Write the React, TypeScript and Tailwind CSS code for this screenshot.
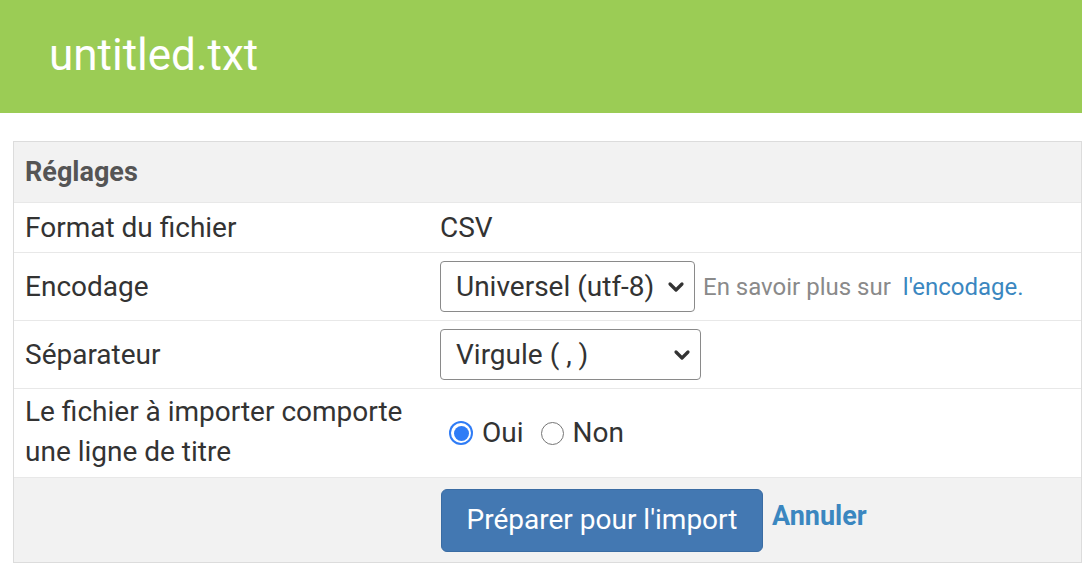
import React from 'react'

const font = { fontFamily: 'Roboto, "Liberation Sans", Arial, sans-serif' }

const Chevron = () => (
    <svg className="absolute right-[10px] top-1/2 -translate-y-1/2 pointer-events-none" width="18" height="13" viewBox="0 0 18 13">
        <path d="M3 3.5 L9 9.5 L15 3.5" fill="none" stroke="#333" strokeWidth="3.2" strokeLinecap="round" strokeLinejoin="round" />
    </svg>
)

const Select = ({ value, width }: { value: string, width: string }) => (
    <div className={`relative ${width} h-[51px]`}>
        <div className="w-full h-full border border-[#8a8a8a] rounded-[4px] bg-white flex items-center pl-[15px] text-[28px] text-[#333]">
            {value}
        </div>
        <Chevron />
    </div>
)

const Radio = ({ checked }: { checked: boolean }) =>
    checked ? (
        <span className="block w-[24px] h-[24px] rounded-full bg-[#2f7cf6] flex items-center justify-center">
            <span className="block w-[20px] h-[20px] rounded-full bg-white flex items-center justify-center">
                <span className="block w-[15px] h-[15px] rounded-full bg-[#2f7cf6]"></span>
            </span>
        </span>
    ) : (
        <span className="block w-[23px] h-[23px] rounded-full border-[1.5px] border-[#767676] bg-white"></span>
    )

const Row = ({ label, children, className }: { label: React.ReactNode, children?: React.ReactNode, className: string }) => (
    <div className={`flex border-t border-[#e8e8e8] ${className}`}>
        <div className="w-[414px] shrink-0 pl-[11px] flex items-center text-[28px] text-[#333]">{label}</div>
        <div className="flex items-center pl-[12px] text-[28px] text-[#333]">{children}</div>
    </div>
)

export default function App() {
    return (
        <div className="w-[1082px] h-[579px] overflow-hidden bg-white" style={font}>
            <header className="h-[113px] bg-[#9bcc55] flex items-center pl-[49px]">
                <h1 className="text-[44px] text-white leading-none -mt-[4px]">untitled.txt</h1>
            </header>

            <div className="mt-[28px] ml-[13px] w-[1069px] border border-[#dcdcdc]">
                <div className="h-[60px] bg-[#f2f2f2] flex items-center pl-[11px] text-[27px] font-bold text-[#555]">
                    Réglages
                </div>

                <Row label="Format du fichier" className="h-[50px]">CSV</Row>

                <Row label="Encodage" className="h-[68px]">
                    <Select value="Universel (utf-8)" width="w-[255px]" />
                    <span className="ml-[8px] text-[24px] text-[#8a8a8a]">En savoir plus sur</span>
                    <a className="ml-[12px] text-[24px] text-[#3b87c0]">l'encodage.</a>
                </Row>

                <Row label="Séparateur" className="h-[68px]">
                    <Select value="Virgule ( , )" width="w-[261px]" />
                </Row>

                <Row
                    label={<span className="leading-[40px] -mt-[2px]">Le fichier à importer comporte<br />une ligne de titre</span>}
                    className="h-[89px]"
                >
                    <div className="flex items-center pl-[9px]">
                        <Radio checked />
                        <span className="ml-[9px]">Oui</span>
                        <span className="ml-[17px]"><Radio checked={false} /></span>
                        <span className="ml-[9px]">Non</span>
                    </div>
                </Row>

                <div className="h-[85px] bg-[#f2f2f2] border-t border-[#e8e8e8] flex items-center pl-[427px]">
                    <button className="w-[322px] h-[63px] rounded-[6px] bg-[#4378b2] border border-[#3a6ca3] text-white text-[28px]">
                        Préparer pour l'import
                    </button>
                    <a className="ml-[9px] -mt-[8px] text-[27px] font-bold text-[#3b87c0]">Annuler</a>
                </div>
            </div>
        </div>
    )
}
